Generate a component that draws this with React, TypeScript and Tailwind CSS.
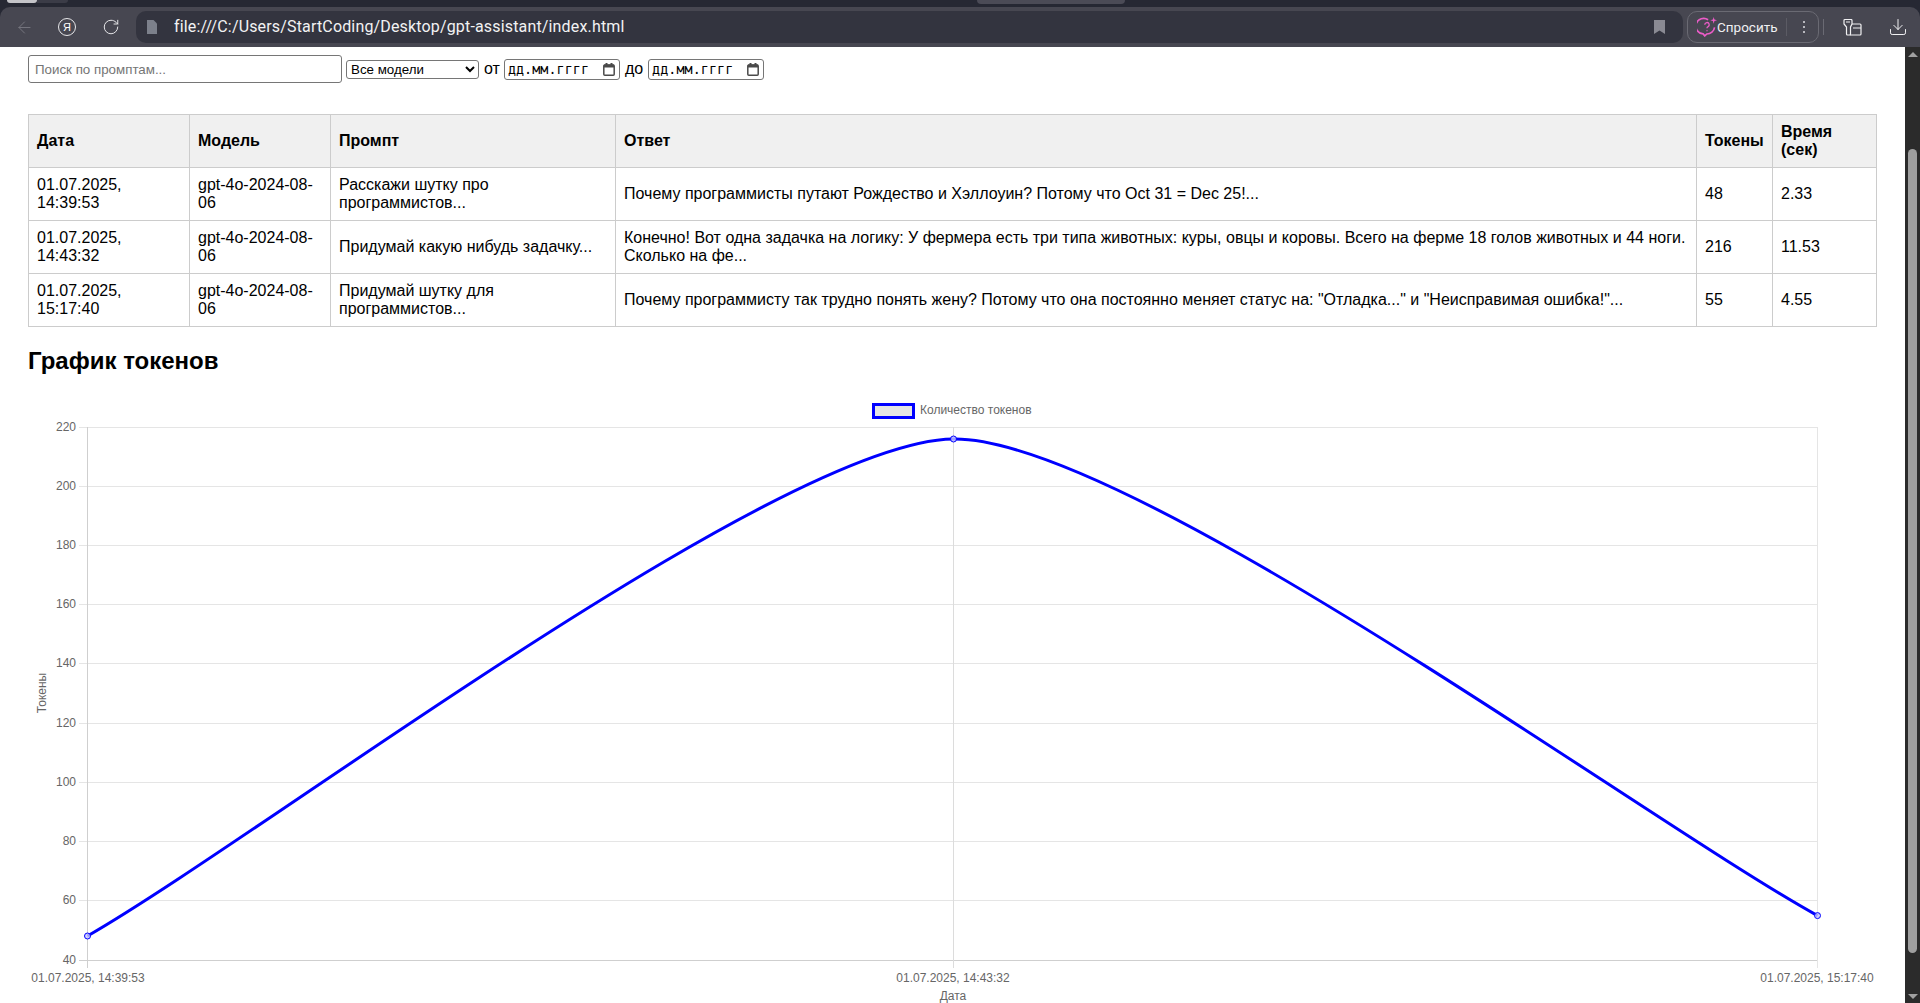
import { RotateCw, ArrowLeft, Download } from "lucide-react"

const rows = [
  {
    date: "01.07.2025, 14:39:53",
    model: "gpt-4o-2024-08-06",
    prompt: "Расскажи шутку про программистов...",
    answer: "Почему программисты путают Рождество и Хэллоуин? Потому что Oct 31 = Dec 25!...",
    tokens: 48,
    time: "2.33",
  },
  {
    date: "01.07.2025, 14:43:32",
    model: "gpt-4o-2024-08-06",
    prompt: "Придумай какую нибудь задачку...",
    answer:
      "Конечно! Вот одна задачка на логику: У фермера есть три типа животных: куры, овцы и коровы. Всего на ферме 18 голов животных и 44 ноги. Сколько на фе...",
    tokens: 216,
    time: "11.53",
  },
  {
    date: "01.07.2025, 15:17:40",
    model: "gpt-4o-2024-08-06",
    prompt: "Придумай шутку для программистов...",
    answer:
      'Почему программисту так трудно понять жену? Потому что она постоянно меняет статус на: "Отладка..." и "Неисправимая ошибка!"...',
    tokens: 55,
    time: "4.55",
  },
]

const yTicks = [220, 200, 180, 160, 140, 120, 100, 80, 60, 40]
const yOf = (v: number) => 960 - (v - 40) * 2.961

function CalendarIcon() {
  return (
    <svg width="12" height="13" viewBox="0 0 12 13" className="shrink-0">
      <path d="M1.800 2h8.400a1 1 0 0 1 1 1v8.200a1 1 0 0 1-1 1H1.800a1 1 0 0 1-1-1V3a1 1 0 0 1 1-1z" fill="none" stroke="#4a4a4a" strokeWidth="1.500" />
      <path d="M1 1.500h10v3H1z" fill="#4a4a4a" />
      <path d="M2.500 0h2v2h-2zM7.500 0h2v2h-2z" fill="#4a4a4a" />
    </svg>
  )
}

function DateField() {
  return (
    <div className="flex h-[21px] w-[116px] items-center justify-between rounded-[3px] border border-[#767676] bg-white pl-[3px] pr-[4px] font-['DejaVu_Sans_Mono',monospace] text-[13.33px] text-black">
      <span className="pt-[2px] tracking-[0.1px]">дд.мм.гггг</span>
      <CalendarIcon />
    </div>
  )
}

function BrowserBar() {
  return (
    <div className="h-[47px] shrink-0 bg-[#262833]">
      <div className="flex h-[7px] items-start">
        <div className="ml-[7px] h-[3px] w-[30px] rounded-b-[5px] bg-[#c4c4c8]" />
        <div className="h-[3px] w-[31px] rounded-br-[5px] bg-[#3b3c47]" />
        <div className="ml-[909px] h-[4px] w-[148px] rounded-b-[6px] bg-[#4b4b56]" />
      </div>
      <div className="flex h-[40px] items-center rounded-t-[10px] bg-[#474751] text-white">
        <div className="flex w-[136px] shrink-0 items-center">
          <ArrowLeft size={19} strokeWidth={1.2} className="ml-[15px] text-[#777780]" />
          <div className="ml-[24px] flex h-[18px] w-[18px] items-center justify-center rounded-full border border-[#e8e8ea] text-[11px] leading-none">
            Я
          </div>
          <RotateCw size={18} strokeWidth={1.3} className="ml-[26px] text-[#e8e8ea]" />
        </div>
        <div className="flex h-[32px] w-[1547px] shrink-0 items-center rounded-[10px] bg-[#33343f]">
          <svg width="12" height="14" viewBox="0 0 12 14" className="ml-[10px]">
            <path d="M1 0h6.500L11 3.500V14H1z" fill="#7c808b" />
          </svg>
          <span className="ml-[16px] font-['Roboto',sans-serif] text-[16px] tracking-[0.16px] text-[#f2f2f3]">
            file:///C:/Users/StartCoding/Desktop/gpt-assistant/index.html
          </span>
          <svg width="11" height="14" viewBox="0 0 11 14" className="ml-auto mr-[18px]">
            <path d="M0 0h11v14L5.500 10.500 0 14z" fill="#8a8a93" />
          </svg>
        </div>
        <div className="ml-[4px] flex h-[32px] w-[132px] shrink-0 items-center rounded-[10px] border border-[#6a6a73] pl-[9px]">
          <svg width="20" height="20" viewBox="0 0 18 18" fill="none" stroke="#ec5cc8" strokeWidth="1.500">
            <path d="M10 2.500A7 7 0 1 0 5.500 15.200L7 17l1.800-1.700a7 7 0 0 0 7-6" />
            <path d="M7 7a2 2 0 1 1 2.800 1.800c-.6.3-.8.7-.8 1.400M9 12v.8" strokeWidth="1.200" />
            <path d="M15 0l.7 2.300L18 3l-2.300.7L15 6l-.7-2.300L12 3l2.300-.7z" fill="#ec5cc8" stroke="none" />
          </svg>
          <span className="w-[58px] whitespace-nowrap font-['Roboto',sans-serif] text-[13.5px] text-[#f0f0f2]">Спросить</span>
          <div className="ml-[11px] h-[18px] w-px bg-[#5b5b64]" />
          <div className="ml-[16px] flex flex-col gap-[3px]">
            <span className="h-[2px] w-[2px] bg-[#b8b8be]" />
            <span className="h-[2px] w-[2px] bg-[#b8b8be]" />
            <span className="h-[2px] w-[2px] bg-[#b8b8be]" />
          </div>
        </div>
        <div className="ml-[4px] h-[16px] w-px bg-[#6a6a73]" />
        <svg width="19" height="17" viewBox="0 0 19 17" fill="none" stroke="#f0f0f2" strokeWidth="1.200" className="ml-[19px] shrink-0">
          <path d="M1 1.500a1 1 0 0 1 1-1h6a1 1 0 0 1 1 1V5L7.500 8v7a1 1 0 0 1-1 1h-2a1 1 0 0 1-1-1V8L1 5z" />
          <path d="M9 5h8a1 1 0 0 1 1 1v9a1 1 0 0 1-1 1H7M10 9h8M3 3h4" />
        </svg>
        <Download size={20} strokeWidth={1.2} className="ml-[26px] shrink-0 text-[#f0f0f2]" />
      </div>
    </div>
  )
}

function TokensChart() {
  return (
    <svg viewBox="28 385 1849 618" className="mt-[10px] block h-[618px] w-[1849px] shrink-0 font-['Liberation_Sans',sans-serif] text-[12px]">
      {/* legend */}
      <rect x="873.500" y="404.500" width="40" height="13" fill="#e5e5e5" stroke="#0000ff" strokeWidth="3" />
      <text x="920" y="414" fill="#666">Количество токенов</text>

      {/* grid */}
      {yTicks.map((v) => {
        const y = Math.floor(yOf(v)) + 0.5
        return (
          <g key={v}>
            <line x1="79" x2="1817" y1={y} y2={y} stroke={v === 40 ? "#cfcfcf" : "#e5e5e5"} />
            <text x="76" y={y + 3} textAnchor="end" fill="#666">
              {v}
            </text>
          </g>
        )
      })}
      <line x1="87.500" x2="87.500" y1="427" y2="968" stroke="#cfcfcf" />
      <line x1="953.500" x2="953.500" y1="427" y2="968" stroke="#dcdcdc" />
      <line x1="1817.500" x2="1817.500" y1="427" y2="968" stroke="#e5e5e5" />

      {/* axis labels */}
      {[
        { x: 88, label: rows[0].date },
        { x: 953, label: rows[1].date },
        { x: 1817, label: rows[2].date },
      ].map((t) => (
        <text key={t.x} x={t.x} y="982" textAnchor="middle" fill="#666">
          {t.label}
        </text>
      ))}
      <text x="953" y="1000" textAnchor="middle" fill="#666">
        Дата
      </text>
      <text transform="translate(46 693) rotate(-90)" textAnchor="middle" fill="#666">
        Токены
      </text>

      {/* line */}
      <path
        d="M87.500 936 C260.700 836.600 779.500 441 953.500 439 C1125.500 437 1644.700 820.300 1817.500 915.600"
        fill="none"
        stroke="#0000ff"
        strokeWidth="3"
      />
      {[
        [87.5, 936],
        [953.5, 439],
        [1817.5, 915.6],
      ].map(([x, y]) => (
        <circle key={x} cx={x} cy={y} r="3" fill="rgba(200,200,255,0.8)" stroke="#0000ff" />
      ))}
    </svg>
  )
}

export default function App() {
  const th = "border border-[#ccc] bg-[#f0f0f0] px-2 py-2 text-left align-middle font-bold"
  const td = "border border-[#ccc] px-2 py-2 align-middle"

  return (
    <div className="flex h-[1003px] w-[1920px] flex-col overflow-hidden bg-white font-['Liberation_Sans',Arial,sans-serif] text-[16px] leading-[18px] text-black">
      <BrowserBar />
      <div className="flex min-h-0 flex-1">
        <main className="flex w-[1905px] shrink-0 flex-col overflow-hidden px-[28px] pt-2">
          <div className="flex h-[28px] shrink-0 items-center text-[16px]">
            <input
              placeholder="Поиск по промптам..."
              className="h-[28px] w-[314px] rounded-[3px] border border-[#767676] px-[6px] text-[13.33px] placeholder:text-[#757575] focus:outline-none"
            />
            <select className="ml-[4px] h-[19px] w-[133px] rounded-[3px] border border-[#767676] bg-white text-[13.33px] leading-none">
              <option>Все модели</option>
            </select>
            <span className="ml-[5px] mr-[4px]">от</span>
            <DateField />
            <span className="mx-[5px]">до</span>
            <DateField />
          </div>

          <table className="mt-[31px] w-[1849px] shrink-0 table-fixed border-collapse">
            <thead>
              <tr className="h-[53px]">
                <th className={`${th} w-[161px]`}>Дата</th>
                <th className={`${th} w-[141px]`}>Модель</th>
                <th className={`${th} w-[285px]`}>Промпт</th>
                <th className={`${th} w-[1081px]`}>Ответ</th>
                <th className={`${th} w-[76px]`}>Токены</th>
                <th className={th}>Время (сек)</th>
              </tr>
            </thead>
            <tbody>
              {rows.map((row) => (
                <tr key={row.date} className="h-[53px]">
                  <td className={td}>{row.date}</td>
                  <td className={td}>{row.model}</td>
                  <td className={td}>{row.prompt}</td>
                  <td className={td}>{row.answer}</td>
                  <td className={td}>{row.tokens}</td>
                  <td className={td}>{row.time}</td>
                </tr>
              ))}
            </tbody>
          </table>

          <h2 className="mt-[20px] shrink-0 text-[24px] font-bold leading-[28px]">График токенов</h2>
          <TokensChart />
        </main>

        {/* scrollbar */}
        <div className="flex w-[15px] shrink-0 flex-col items-center bg-[#2b2b2b]">
          <div className="mt-[5px] h-0 w-0 border-x-[5px] border-b-[5px] border-x-transparent border-b-[#a0a0a0]" />
          <div className="mt-[92px] h-[804px] w-[9px] rounded-[5px] bg-[#9f9f9f]" />
          <div className="mt-auto mb-[4px] h-0 w-0 border-x-[5px] border-t-[5px] border-x-transparent border-t-[#a0a0a0]" />
        </div>
      </div>
    </div>
  )
}
